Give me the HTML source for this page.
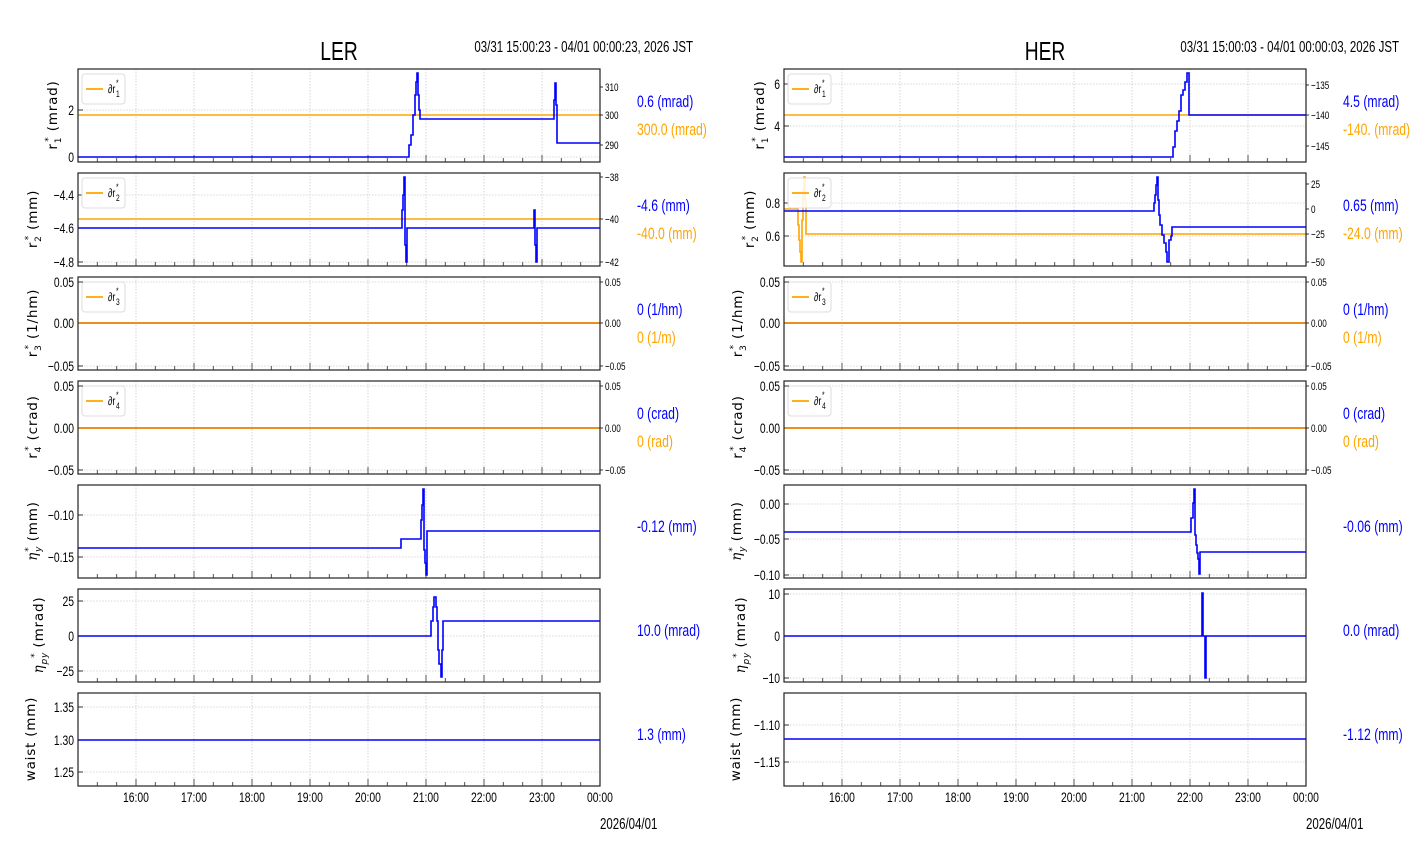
<!DOCTYPE html>
<html><head><meta charset="utf-8"><style>
html,body{margin:0;padding:0;background:#fff;width:1412px;height:864px;overflow:hidden}
svg{display:block}
.n{font-family:"Liberation Sans",sans-serif}
.d{font-family:"DejaVu Sans","Liberation Sans",sans-serif}
</style></head><body>
<svg id="s" width="1412" height="864" xmlns="http://www.w3.org/2000/svg"></svg>
<script>
const S=document.getElementById('s');let h='';
const B='#0000ff',O='#ffa500';
function t(x,y,s,sz,cls,anc,fill,sx){sx=sx||0.74;h+=`<text transform="translate(${x},${y}) scale(${sx},1)" font-size="${sz}" class="${cls}" text-anchor="${anc||'start'}" fill="${fill||'#000'}">${s}</text>`;}
function pl(pts,c,w){h+=`<polyline points="${pts.map(p=>p.join(',')).join(' ')}" fill="none" stroke="${c}" stroke-width="${w||1.6}"/>`;}
function st(arr){const r=[];for(let i=0;i<arr.length;i++){if(i>0)r.push([arr[i][0],arr[i-1][1]]);r.push(arr[i]);}return r;}
function side(X0,title,range,panels){
 const X1=X0+522;
 t(X0+261,60,title,26,'n','middle');
 t(X1+93,52,range,15.5,'n','end');
 panels.forEach((p,i)=>{
  const T=69+i*104,Bt=T+93;
  for(let k=1;k<9;k++){const x=X0+k*58;h+=`<line x1="${x}" y1="${T}" x2="${x}" y2="${Bt}" stroke="#ccc" stroke-dasharray="1.5,1.5" stroke-width="0.8"/>`;}
  p.yt.forEach(v=>{h+=`<line x1="${X0}" y1="${v[1]}" x2="${X1}" y2="${v[1]}" stroke="#ccc" stroke-dasharray="1.5,1.5" stroke-width="0.8"/>`;
   t(X0-4,v[1]+5,v[0],14,'n','end');h+=`<line x1="${X0}" y1="${v[1]}" x2="${X0+5}" y2="${v[1]}" stroke="#333"/>`;});
  for(let k=1;k<27;k++){const x=X0+k*58/3;const mj=k%3==0;h+=`<line x1="${x}" y1="${Bt}" x2="${x}" y2="${Bt-(mj?7:4)}" stroke="#555" stroke-width="1"/>`;}
  if(p.ry){p.ry.forEach(v=>{h+=`<line x1="${X1}" y1="${v[1]}" x2="${X1+3}" y2="${v[1]}" stroke="#333"/>`;t(X1+5,v[1]+4,v[0],11,'n','start');});}
  if(p.o!==undefined){pl(p.o,O,1.6);}
  if(p.mid){h+=`<line x1="${X0}" y1="${p.mid}" x2="${X1}" y2="${p.mid}" stroke="${O}" stroke-width="2"/><line x1="${X0}" y1="${p.mid}" x2="${X1}" y2="${p.mid}" stroke="#c07050" stroke-width="0.8"/>`;}
  if(p.b)pl(p.b,B,1.6);
  if(p.leg){h+=`<rect x="${X0+4}" y="${T+5}" width="43" height="30" rx="3" fill="#fff" fill-opacity="0.85" stroke="#ddd"/><line x1="${X0+8}" y1="${T+20}" x2="${X0+25}" y2="${T+20}" stroke="${O}" stroke-width="1.8"/>`;
   t(X0+30,T+24,'∂r',12,'n');t(X0+38,T+28,p.leg,9,'n');t(X0+38,T+17,'*',9,'n');}
  h+=`<rect x="${X0}" y="${T}" width="522" height="93" fill="none" stroke="#222" stroke-width="1.2"/>`;
  h+=`<text transform="translate(${X0-17-(p.lx||0)},${T+46}) rotate(-90)" font-size="13.5" class="d" text-anchor="middle" letter-spacing="0.8">${p.yl}</text>`;
  if(p.v1)t(X1+37,T+38,p.v1,16.5,'n','start',B);
  if(p.v2)t(X1+37,T+66,p.v2,16.5,'n','start',O);
  if(p.v0)t(X1+37,T+47,p.v0,16.5,'n','start',B);
 });
 const hs=['16:00','17:00','18:00','19:00','20:00','21:00','22:00','23:00','00:00'];
 hs.forEach((s,k)=>t(X0+(k+1)*58,802,s,14,'n','middle'));
 t(X1,829,'2026/04/01',15.5,'n','start');
}
const r=(n,u)=>`r<tspan font-size="9" dy="4">${n}</tspan><tspan font-size="9" dx="-5" dy="-10">*</tspan><tspan dy="6"> (${u})</tspan>`;
const eta=(n,u)=>`<tspan font-style="italic" font-family="DejaVu Serif">η</tspan><tspan font-size="9" dy="4" font-style="italic">${n}</tspan><tspan font-size="9" dx="-6" dy="-10">*</tspan><tspan dy="6"> (${u})</tspan>`;
const L=78,R=784;
side(L,'LER','03/31 15:00:23 - 04/01 00:00:23, 2026 JST',[
 {yt:[['2',110],['0',157]],ry:[['310',87],['300',115],['290',145]],leg:'1',yl:r(1,'mrad'),lx:4,v1:'0.6 (mrad)',v2:'300.0 (mrad)',
  o:[[L,115],[L+522,115]],b:st([[L,157],[408,157],[409,145],[411,135],[413,115],[415,95],[416,82],[417,73],[418,95],[419,110],[420,119],[553,119],[554,100],[555,83],[556,105],[557,143],[600,143]])},
 {yt:[['−4.4',195],['−4.6',228],['−4.8',262]],ry:[['−38',177],['−40',219],['−42',262]],leg:'2',yl:r(2,'mm'),lx:24,v1:'-4.6 (mm)',v2:'-40.0 (mm)',
  o:[[L,219],[L+522,219]],b:st([[L,228],[401,228],[402,210],[403,195],[404,177],[405,245],[406,262],[407,228],[533,228],[534,210],[535,245],[536,262],[537,228],[600,228]])},
 {yt:[['0.05',282],['0.00',323],['−0.05',366]],ry:[['0.05',282],['0.00',323],['−0.05',366]],leg:'3',yl:r(3,'1/hm'),lx:24,mid:323,v1:'0 (1/hm)',v2:'0 (1/m)'},
 {yt:[['0.05',386],['0.00',428],['−0.05',470]],ry:[['0.05',386],['0.00',428],['−0.05',470]],leg:'4',yl:r(4,'crad'),lx:24,mid:428,v1:'0 (crad)',v2:'0 (rad)'},
 {yt:[['−0.10',515],['−0.15',557]],yl:eta('y','mm'),lx:24,v0:'-0.12 (mm)',
  b:st([[L,548],[400,548],[401,539],[420,539],[421,520],[422,505],[423,489],[424,550],[425,563],[426,575],[427,531],[600,531]])},
 {yt:[['25',601],['0',636],['−25',671]],yl:eta('py','mrad'),lx:18,v0:'10.0 (mrad)',
  b:st([[L,636],[430,636],[431,621],[433,607],[434,597],[436,607],[437,621],[438,650],[439,664],[441,677],[442,650],[443,621],[600,621]])},
 {yt:[['1.35',707],['1.30',740],['1.25',772]],yl:'waist (mm)',lx:26,v0:'1.3 (mm)',b:[[L,740],[600,740]]}
]);
side(R,'HER','03/31 15:00:03 - 04/01 00:00:03, 2026 JST',[
 {yt:[['6',84],['4',126]],ry:[['−135',85],['−140',115],['−145',146]],leg:'1',yl:r(1,'mrad'),lx:3,v1:'4.5 (mrad)',v2:'-140. (mrad)',
  o:[[R,115],[R+522,115]],b:st([[R,157],[1172,157],[1173,147],[1175,131],[1177,121],[1179,111],[1181,95],[1183,90],[1185,82],[1187,73],[1189,115],[1306,115]])},
 {yt:[['0.8',203],['0.6',236]],ry:[['25',184],['0',209],['−25',234],['−50',262]],leg:'2',yl:r(2,'mm'),lx:13,v1:'0.65 (mm)',v2:'-24.0 (mm)',
  o:st([[R,209],[797,209],[798,225],[799,240],[800,252],[801,262],[802,220],[803,190],[804,177],[805,200],[806,234],[1306,234]]),
  b:st([[R,211],[1153,211],[1154,203],[1155,195],[1156,185],[1157,177],[1158,200],[1159,215],[1160,225],[1162,235],[1164,243],[1166,252],[1167,262],[1169,240],[1171,236],[1172,227],[1306,227]])},
 {yt:[['0.05',282],['0.00',323],['−0.05',366]],ry:[['0.05',282],['0.00',323],['−0.05',366]],leg:'3',yl:r(3,'1/hm'),lx:25,mid:323,v1:'0 (1/hm)',v2:'0 (1/m)'},
 {yt:[['0.05',386],['0.00',428],['−0.05',470]],ry:[['0.05',386],['0.00',428],['−0.05',470]],leg:'4',yl:r(4,'crad'),lx:25,mid:428,v1:'0 (crad)',v2:'0 (rad)'},
 {yt:[['0.00',504],['−0.05',539],['−0.10',575]],yl:eta('y','mm'),lx:26,v0:'-0.06 (mm)',
  b:st([[R,532],[1190,532],[1191,518],[1193,503],[1194,489],[1195,535],[1196,545],[1197,553],[1198,559],[1199,574],[1200,552],[1306,552]])},
 {yt:[['10',594],['0',636],['−10',678]],yl:eta('py','mrad'),lx:22,v0:'0.0 (mrad)',
  b:st([[R,636],[1201,636],[1202,593],[1203,636],[1205,678],[1206,636],[1306,636]])},
 {yt:[['−1.10',725],['−1.15',762]],yl:'waist (mm)',lx:27,v0:'-1.12 (mm)',b:[[R,739],[1306,739]]}
]);
S.innerHTML=h;
</script>
</body></html>
